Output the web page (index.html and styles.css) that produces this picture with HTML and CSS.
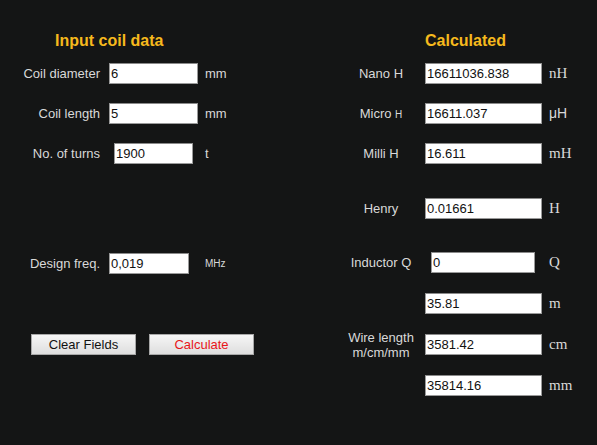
FILE: index.html
```html
<!DOCTYPE html>
<html>
<head>
<meta charset="utf-8">
<link rel="stylesheet" href="styles.css">
</head>
<body>
<div class="page">
  <section class="col left">
    <h2 class="heading">Input coil data</h2>
    <div class="row r-first">
      <label class="lbl">Coil diameter</label>
      <input class="field f-std" type="text" value="6">
      <span class="unit">mm</span>
    </div>
    <div class="row r-next">
      <label class="lbl">Coil length</label>
      <input class="field f-std" type="text" value="5">
      <span class="unit">mm</span>
    </div>
    <div class="row r-next">
      <label class="lbl">No. of turns</label>
      <input class="field f-turns" type="text" value="1900">
      <span class="unit">t</span>
    </div>
    <div class="row r-freq">
      <label class="lbl">Design freq.</label>
      <input class="field f-freq" type="text" value="0,019">
      <span class="unit unit-small">MHz</span>
    </div>
    <div class="buttons">
      <button class="btn">Clear Fields</button>
      <button class="btn btn-calc">Calculate</button>
    </div>
  </section>
  <section class="col right">
    <h2 class="heading heading-r">Calculated</h2>
    <div class="rgrid">
      <label class="rlbl">Nano H</label>
      <input class="field f-out" type="text" value="16611036.838">
      <span class="runit">nH</span>

      <label class="rlbl">Micro <span class="smallh">H</span></label>
      <input class="field f-out" type="text" value="16611.037">
      <span class="runit runit-sans">μH</span>

      <label class="rlbl">Milli H</label>
      <input class="field f-out" type="text" value="16.611">
      <span class="runit">mH</span>

      <label class="rlbl">Henry</label>
      <input class="field f-out" type="text" value="0.01661">
      <span class="runit">H</span>

      <label class="rlbl">Inductor Q</label>
      <input class="field f-q" type="text" value="0">
      <span class="runit">Q</span>

      <label class="rlbl wire">Wire length<br>m/cm/mm</label>
      <input class="field f-out" type="text" value="35.81">
      <span class="runit">m</span>
      <input class="field f-out" type="text" value="3581.42">
      <span class="runit">cm</span>
      <input class="field f-out" type="text" value="35814.16">
      <span class="runit">mm</span>
    </div>
  </section>
</div>
</body>
</html>
```

FILE: styles.css
```css
html, body {
  margin: 0;
  padding: 0;
  background: #141515;
  width: 597px;
  height: 445px;
  overflow: hidden;
}

.page {
  display: grid;
  grid-template-columns: 300px 297px;
  font-family: "Liberation Sans", Arial, sans-serif;
  font-size: 13px;
  color: #d9d9d9;
}

.heading {
  margin: 31px 0 0 0;
  height: 20px;
  line-height: 20px;
  font-size: 16px;
  font-weight: bold;
  color: #f6b91d;
  padding-left: 55px;
}

.heading-r {
  padding-left: 125px;
}

.row {
  display: flex;
  align-items: center;
  height: 21px;
}

.r-first { margin-top: 12px; }
.r-next { margin-top: 19px; }
.r-freq { margin-top: 89px; }

.lbl {
  width: 100px;
  text-align: right;
  flex: none;
}

.field {
  box-sizing: border-box;
  height: 21px;
  border: 1px solid #9a9a9a;
  border-top-color: #8a8a8a;
  background: #fff;
  color: #111;
  font-family: "Liberation Sans", Arial, sans-serif;
  font-size: 13px;
  padding: 0 1px;
  margin: 0;
  outline: none;
}

.f-std { width: 89px; margin-left: 9px; }
.f-turns { width: 79px; margin-left: 14px; margin-right: 5px; }
.f-freq { width: 80px; margin-left: 9px; margin-right: 9px; }

.unit {
  margin-left: 7px;
}

.unit-small {
  font-size: 10px;
}

.buttons {
  display: flex;
  gap: 13px;
  margin-top: 60px;
  padding-left: 31px;
}

.btn {
  box-sizing: border-box;
  width: 105px;
  height: 21px;
  padding: 0;
  border: 1px solid #a8a8a8;
  background: linear-gradient(#f6f6f6, #dedede);
  font-family: "Liberation Sans", Arial, sans-serif;
  font-size: 13px;
  color: #111;
}

.btn-calc {
  color: #e8161a;
}

.rgrid {
  display: grid;
  grid-template-columns: 80px 121px auto;
  grid-template-rows: 40px 40px 55px 54px 41px 41px 41px 21px;
  margin-top: 12px;
  padding-left: 41px;
  align-items: start;
}

.rlbl {
  grid-column: 1;
  text-align: center;
  line-height: 21px;
  height: 21px;
  white-space: nowrap;
}

.rgrid > .field { margin-left: 4px; grid-column: 2; }

.f-out { width: 117px; }
.rgrid > .f-q { width: 104px; margin-left: 10px; }

.runit {
  grid-column: 3;
  font-family: "Liberation Serif", "Times New Roman", serif;
  font-size: 15px;
  line-height: 21px;
  margin-left: 7px;
  color: #d9d9d9;
}

.runit-sans {
  font-family: "Liberation Sans", Arial, sans-serif;
  font-size: 14px;
}

.smallh {
  font-size: 10px;
}

.wire {
  grid-row: 6 / span 3;
  align-self: center;
  line-height: 15px;
  height: auto;
}
```
